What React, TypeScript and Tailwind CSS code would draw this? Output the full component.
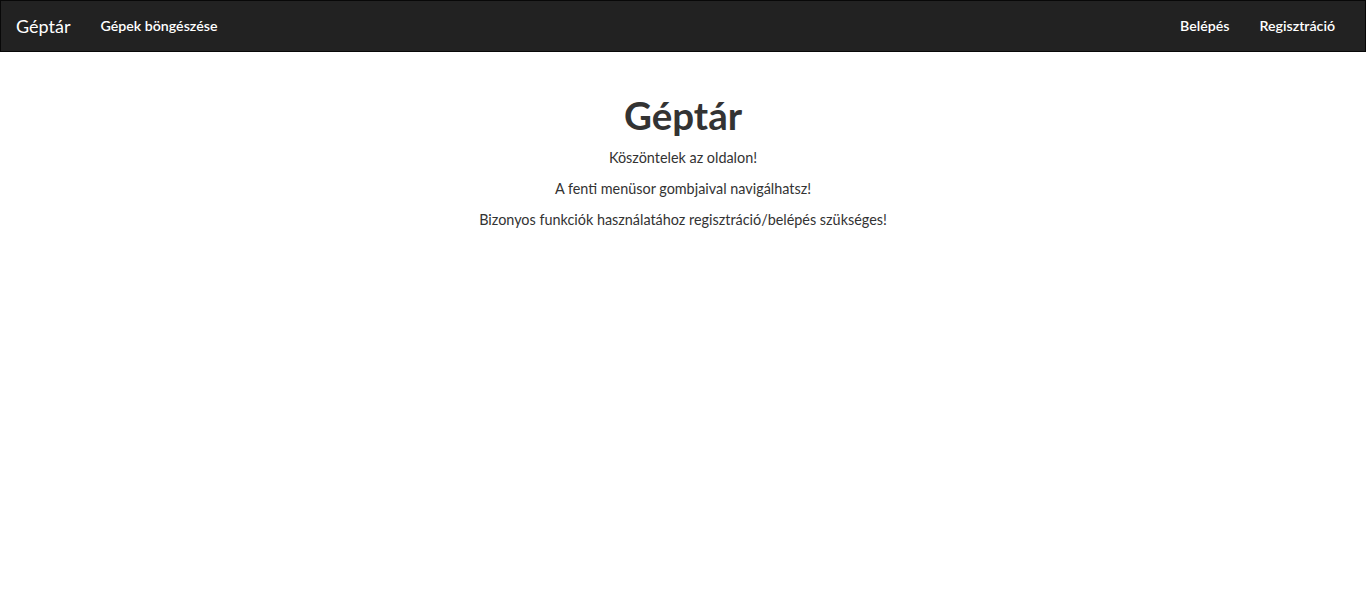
import React from 'react';

const font = { fontFamily: '"Source Sans Pro", Lato, "Open Sans", sans-serif' };

function Navbar() {
  return (
    <nav className="h-[52px] bg-[#222222] border border-[#080808] flex items-center justify-between px-[15px]">
      <div className="flex items-center h-full">
        <a href="#" className="px-[15px] -ml-[15px] text-[18px] text-white leading-[50px]">
          Géptár
        </a>
        <a href="#" className="px-[15px] text-[14.2px] font-semibold text-white leading-[50px]">
          Gépek böngészése
        </a>
      </div>
      <div className="flex items-center h-full">
        <a href="#" className="px-[15px] text-[14.2px] font-semibold text-white leading-[50px]">
          Belépés
        </a>
        <a href="#" className="px-[15px] text-[14.2px] font-semibold text-white leading-[50px]">
          Regisztráció
        </a>
      </div>
    </nav>
  );
}

export default function App() {
  return (
    <div className="min-h-[589px] bg-white text-[#333333]" style={font}>
      <Navbar />
      <main className="pt-[42px] text-center">
        <h1 className="text-[38.5px] font-bold leading-[1.1] mb-[11px]">Géptár</h1>
        <p className="text-[14.4px] leading-[21px] mb-[10px]">Köszöntelek az oldalon!</p>
        <p className="text-[14.4px] leading-[21px] mb-[10px]">A fenti menüsor gombjaival navigálhatsz!</p>
        <p className="text-[14.4px] leading-[21px] mb-[10px]">
          Bizonyos funkciók használatához regisztráció/belépés szükséges!
        </p>
      </main>
    </div>
  );
}
